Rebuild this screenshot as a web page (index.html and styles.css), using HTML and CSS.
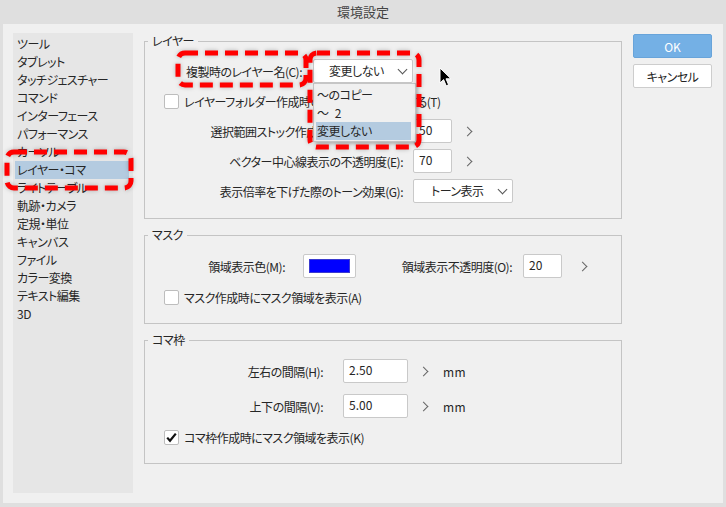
FILE: index.html
```html
<!DOCTYPE html>
<html lang="ja">
<head>
    <meta charset="UTF-8">
    <meta name="viewport" content="width=device-width, initial-scale=1.0">
    <title>環境設定</title>
    <link rel="stylesheet" href="styles.css">
</head>
<body>
    <div class="window">
        <div class="titlebar">環境設定</div>

        <div class="body">
            <ul class="sidebar">
                <li>ツール</li>
                <li>タブレット</li>
                <li>タッチジェスチャー</li>
                <li>コマンド</li>
                <li>インターフェース</li>
                <li>パフォーマンス</li>
                <li>カーソル</li>
                <li class="selected">レイヤー・コマ</li>
                <li>ライトテーブル</li>
                <li>軌跡・カメラ</li>
                <li>定規・単位</li>
                <li>キャンバス</li>
                <li>ファイル</li>
                <li>カラー変換</li>
                <li>テキスト編集</li>
                <li>3D</li>
            </ul>

            <div class="main">
                <fieldset class="group">
                    <legend>レイヤー</legend>
                    <div class="group-body layer-body">
                        <div class="row">
                            <span class="lbl lbl-name">複製時のレイヤー名(C):</span>
                            <div class="select-wrap">
                                <div class="select sel-name">変更しない<span class="caret"></span></div>
                                <ul class="dropdown">
                                    <li>〜のコピー</li>
                                    <li>〜 2</li>
                                    <li class="hl">変更しない</li>
                                </ul>
                            </div>
                        </div>
                        <div class="row">
                            <span class="checkbox"></span>
                            <span class="check-text">レイヤーフォルダー作成時のフォルダーを展開する(T)</span>
                        </div>
                        <div class="row">
                            <span class="lbl lbl-wide">選択範囲ストック作成時の不透明度(S):</span>
                            <span class="input in-small">50</span>
                            <span class="chev chev-layer"></span>
                        </div>
                        <div class="row">
                            <span class="lbl lbl-wide">ベクター中心線表示の不透明度(E):</span>
                            <span class="input in-small">70</span>
                            <span class="chev chev-layer"></span>
                        </div>
                        <div class="row">
                            <span class="lbl lbl-wide">表示倍率を下げた際のトーン効果(G):</span>
                            <div class="select sel-tone">トーン表示<span class="caret"></span></div>
                        </div>
                    </div>
                </fieldset>

                <fieldset class="group">
                    <legend>マスク</legend>
                    <div class="group-body mask-body">
                        <div class="row">
                            <span class="lbl lbl-color">領域表示色(M):</span>
                            <span class="swatch"><span class="swatch-fill"></span></span>
                            <span class="lbl lbl-opacity">領域表示不透明度(O):</span>
                            <span class="input in-small">20</span>
                            <span class="chev chev-mask"></span>
                        </div>
                        <div class="row row-gap7">
                            <span class="checkbox"></span>
                            <span class="check-text">マスク作成時にマスク領域を表示(A)</span>
                        </div>
                    </div>
                </fieldset>

                <fieldset class="group">
                    <legend>コマ枠</legend>
                    <div class="group-body koma-body">
                        <div class="row">
                            <span class="lbl lbl-koma">左右の間隔(H):</span>
                            <span class="input in-mm">2.50</span>
                            <span class="chev chev-koma"></span>
                            <span class="unit">mm</span>
                        </div>
                        <div class="row row-gap11">
                            <span class="lbl lbl-koma">上下の間隔(V):</span>
                            <span class="input in-mm">5.00</span>
                            <span class="chev chev-koma"></span>
                            <span class="unit">mm</span>
                        </div>
                        <div class="row row-gap7">
                            <span class="checkbox checked">
                                <svg width="15" height="15" viewBox="0 0 15 15"><path d="M3.2 7.6 L6 10.8 L11.8 3.6" fill="none" stroke="#111" stroke-width="2.2"/></svg>
                            </span>
                            <span class="check-text">コマ枠作成時にマスク領域を表示(K)</span>
                        </div>
                    </div>
                </fieldset>
            </div>

            <div class="actions">
                <button class="btn btn-ok">OK</button>
                <button class="btn">キャンセル</button>
            </div>
        </div>

        <svg class="marks" width="726" height="507" viewBox="0 0 726 507">
            <rect x="7" y="152" width="124" height="36" rx="7"/>
            <rect x="178" y="53" width="128" height="32" rx="7"/>
            <rect x="310" y="53" width="109" height="94" rx="7"/>
        </svg>

        <svg class="cursor" width="14" height="21" viewBox="0 0 14 21">
            <path d="M1 1 L1 16 L4.6 12.6 L7.2 18.8 L9.6 17.8 L7 11.8 L12 11.8 Z" fill="#000" stroke="#fff" stroke-width="1"/>
        </svg>
    </div>
</body>
</html>
```

FILE: styles.css
```css
body {
    margin: 0;
    background: #dfdfdf;
    font-family: "Noto Sans CJK JP", sans-serif;
    font-size: 12px;
    color: #262626;
    font-feature-settings: "palt";
    letter-spacing: -0.5px;
}

.window {
    position: relative;
    width: 726px;
    height: 507px;
    background: #dfdfdf;
    overflow: hidden;
}

.titlebar {
    height: 24px;
    line-height: 24px;
    text-align: center;
    font-size: 13px;
    color: #444;
    letter-spacing: 0;
}

.body {
    display: flex;
    gap: 11px;
    margin: 0 3px;
    height: 479px;
    box-sizing: border-box;
    padding: 9px 11px 10px 10px;
    background: #f0f0f0;
}

/* left category list */
.sidebar {
    list-style: none;
    margin: 0;
    padding: 2px 0;
    width: 120px;
    flex: none;
    background: #e6e6e6;
}
.sidebar li {
    height: 18px;
    line-height: 18px;
    padding-left: 4px;
    white-space: nowrap;
}
.sidebar li.selected {
    margin: 0 4px 0 2px;
    padding-left: 2px;
    background: #b4cbe0;
}

.main {
    width: 478px;
    flex: none;
    display: flex;
    flex-direction: column;
    gap: 8px;
}

.group {
    margin: 0;
    padding: 0;
    min-width: 0;
    border: 1px solid #c4c4c4;
}
.group legend {
    margin-left: 3px;
    padding: 0 4px;
    line-height: 16px;
}
.group-body {
    padding: 10px 0 15px 19px;
}
.mask-body { padding: 11px 0 14px 19px; }
.koma-body { padding: 11px 0 14px 19px; }

.row {
    display: flex;
    align-items: center;
    height: 24px;
    margin-top: 6px;
    white-space: nowrap;
}
.row:first-child { margin-top: 0; }
.row.row-gap7 { margin-top: 7px; }
.row.row-gap11 { margin-top: 11px; }

.lbl { text-align: right; flex: none; }
.lbl-name { width: 138px; margin-right: 11px; }
.lbl-wide { width: 239px; margin-right: 10px; }
.lbl-color { width: 121px; margin-right: 18px; }
.lbl-opacity { width: 113px; margin-left: 43px; margin-right: 11px; }
.lbl-koma { width: 159px; margin-right: 20px; }

.input, .select, .swatch {
    box-sizing: border-box;
    height: 24px;
    background: #fff;
    border: 1px solid #c9c9c9;
    border-radius: 2px;
    flex: none;
}
.input {
    line-height: 20px;
    padding-left: 5px;
    letter-spacing: 0;
}
.in-small { width: 39px; }
.in-mm { width: 65px; }

.select {
    position: relative;
    width: 100px;
    line-height: 22px;
    padding-left: 15px;
}
.sel-tone { padding-left: 17px; }
.caret {
    position: absolute;
    right: 6px;
    top: 6px;
    width: 6px;
    height: 6px;
    border-right: 1px solid #555;
    border-bottom: 1px solid #555;
    transform: rotate(45deg);
}

.select-wrap { position: relative; }
.dropdown {
    position: absolute;
    left: 0;
    top: 24px;
    width: 103px;
    box-sizing: border-box;
    margin: 0;
    padding: 2px 0 1px;
    list-style: none;
    background: #f0f0f0;
    border: 1px solid #c6c6c6;
    box-shadow: 2px 2px 3px rgba(0, 0, 0, 0.25);
    z-index: 2;
    word-spacing: 4px;
}
.dropdown li {
    height: 18px;
    line-height: 18px;
    padding-left: 3px;
}
.dropdown li.hl {
    margin: 0 4px 0 2px;
    padding-left: 1px;
    background: #b4cbe0;
}

.chev {
    width: 6px;
    height: 6px;
    border-right: 1px solid #666;
    border-top: 1px solid #666;
    transform: rotate(45deg);
    flex: none;
}
.chev-layer { margin-left: 12px; }
.chev-mask { margin-left: 17px; }
.chev-koma { margin-left: 12px; }
.unit { margin-left: 16px; letter-spacing: 0.5px; }

.swatch {
    width: 53px;
    padding: 4px 5px;
}
.swatch-fill {
    display: block;
    height: 100%;
    background: #0000ff;
    box-shadow: inset 0 0 0 1px #3a3ad0;
}

.checkbox {
    box-sizing: border-box;
    width: 15px;
    height: 15px;
    background: #fff;
    border: 1px solid #bdbdbd;
    border-radius: 2px;
    flex: none;
    position: relative;
}
.checkbox svg {
    position: absolute;
    left: -1px;
    top: -1px;
}
.check-text { margin-left: 5px; }

/* right buttons */
.actions {
    width: 79px;
    flex: none;
    display: flex;
    flex-direction: column;
    gap: 6px;
    padding-top: 1px;
}
.btn {
    height: 24px;
    background: #fff;
    border: 1px solid #cdcdcd;
    border-radius: 2px;
    font-family: inherit;
    font-size: 12px;
    color: #222;
    font-feature-settings: "palt";
    letter-spacing: -0.5px;
    padding: 0;
}
.btn-ok {
    background: #74b0e5;
    border-color: #68a4da;
    color: #fff;
    letter-spacing: 0;
}

/* annotation overlays */
.marks {
    position: absolute;
    left: 0;
    top: 0;
    pointer-events: none;
    z-index: 5;
    filter: drop-shadow(0 0 2px rgba(0, 0, 0, 0.25));
}
.marks rect {
    fill: none;
    stroke: #f00;
    stroke-width: 5;
    stroke-dasharray: 13 7;
}

.cursor {
    position: absolute;
    left: 439px;
    top: 67px;
    z-index: 6;
}
```
